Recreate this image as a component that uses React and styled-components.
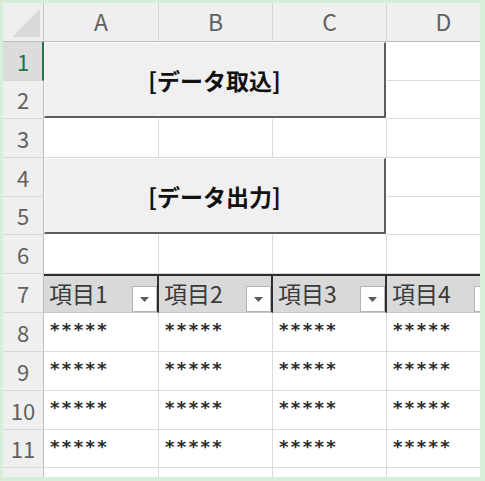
import React from "react";
import styled, { createGlobalStyle } from "styled-components";

const Global = createGlobalStyle`
  html, body { margin: 0; padding: 0; background: #d8eed8; }
  body { font-family: "Noto Sans CJK JP", "Noto Sans", sans-serif; }
`;

const Frame = styled.div`
  width: 485px;
  height: 481px;
  box-sizing: border-box;
  padding: 3px 5px 4px 3px;
  background: #d8eed8;
`;

const Sheet = styled.div`
  width: 477px;
  height: 474px;
  overflow: hidden;
  background: #ffffff;
  display: grid;
  grid-template-columns: 41px 115px 114px 114px 114px;
  grid-template-rows: 39px 39px 38px 39px 39px 38px 39px 39px 39px 39px 39px 38px 39px;
`;

const Corner = styled.div`
  background: #efefef;
  border-right: 1px solid #c8c8c8;
  border-bottom: 1px solid #bdbdbd;
  display: flex;
  align-items: flex-end;
  justify-content: flex-end;
  padding: 0 3px 4px 0;
  box-sizing: border-box;
`;

const ColHead = styled.div`
  background: #efefef;
  border-right: 1px solid #d6d6d6;
  border-bottom: 1px solid #bdbdbd;
  box-sizing: border-box;
  display: flex;
  align-items: center;
  justify-content: center;
  font-size: 23px;
  color: #616161;
  padding-bottom: 2px;
`;

const RowHead = styled.div`
  background: ${(p) => (p.$active ? "#dcdcdc" : "#efefef")};
  border-right: ${(p) => (p.$active ? "2px solid #217346" : "1px solid #bdbdbd")};
  border-bottom: 1px solid #d6d6d6;
  box-sizing: border-box;
  display: flex;
  align-items: center;
  justify-content: center;
  font-size: 22px;
  color: ${(p) => (p.$active ? "#217346" : "#616161")};
  padding-left: ${(p) => (p.$active ? "1px" : "0")};
  padding-bottom: 1px;
`;

const Cell = styled.div`
  background: #ffffff;
  border-right: 1px solid #dadada;
  border-bottom: 1px solid #dadada;
  box-sizing: border-box;
  display: flex;
  align-items: flex-start;
  padding: 8px 0 0 6px;
  font-family: "DejaVu Sans", sans-serif;
  font-weight: 700;
  font-size: 18px;
  line-height: 18px;
  letter-spacing: 2.4px;
  color: #2a2a2a;
  white-space: nowrap;
  overflow: hidden;
`;

const Button = styled.div`
  grid-column: 2 / 5;
  grid-row: ${(p) => p.$row};
  background: #f0f0f0;
  border-right: 2px solid #5e5e5e;
  border-bottom: 2px solid #5e5e5e;
  border-top: 1px solid #fafafa;
  border-left: 1px solid #fafafa;
  margin: 0 1px 1px 0;
  box-sizing: border-box;
  display: flex;
  align-items: center;
  justify-content: center;
  font-size: 23px;
  font-weight: 700;
  color: #111111;
  padding-top: 1px;
`;

const HeadCell = styled.div`
  background: #d9d9d9;
  border-top: 2px solid #2e2e2e;
  border-right: 2px solid #2e2e2e;
  border-bottom: 1px solid #c8c8c8;
  box-sizing: border-box;
  display: flex;
  justify-content: space-between;
  align-items: flex-end;
  padding-left: 5px;
  font-size: 23px;
  color: #3a3a3a;
  white-space: nowrap;
`;

const HeadLabel = styled.span`
  align-self: center;
  line-height: 1;
  padding-bottom: 1px;
`;

const Filter = styled.div`
  width: 25px;
  height: 26px;
  box-sizing: border-box;
  background: #ffffff;
  border: 1px solid #b4b4b4;
  display: flex;
  align-items: center;
  justify-content: center;
  flex-shrink: 0;
`;

const cols = ["A", "B", "C", "D"];
const rowCount = 12;

function Tri() {
  return (
    <svg width="28" height="28" viewBox="0 0 28 28">
      <polygon points="28,0 28,28 0,28" fill="#dadada" />
    </svg>
  );
}

function Arrow() {
  return (
    <svg width="9" height="5" viewBox="0 0 9 5">
      <polygon points="0,0 9,0 4.5,5" fill="#5a5a5a" />
    </svg>
  );
}

export default function App() {
  const items = [];
  items.push(
    <Corner key="corner">
      <Tri />
    </Corner>
  );
  cols.forEach((c) => items.push(<ColHead key={"h" + c}>{c}</ColHead>));

  for (let r = 1; r <= rowCount; r++) {
    items.push(
      <RowHead key={"r" + r} $active={r === 1}>
        {r < 12 ? r : ""}
      </RowHead>
    );
    if (r === 1) {
      items.push(
        <Button key="b1" $row="2 / 4">
          [データ取込]
        </Button>
      );
      items.push(<Cell key="c1d" />);
    } else if (r === 4) {
      items.push(
        <Button key="b2" $row="5 / 7">
          [データ出力]
        </Button>
      );
      items.push(<Cell key="c4d" />);
    } else if (r === 2 || r === 5) {
      items.push(<Cell key={"c" + r + "d"} />);
    } else if (r === 7) {
      [1, 2, 3, 4].forEach((n) =>
        items.push(
          <HeadCell key={"th" + n}>
            <HeadLabel>項目{n}</HeadLabel>
            <Filter>
              <Arrow />
            </Filter>
          </HeadCell>
        )
      );
    } else if (r >= 8 && r <= 11) {
      cols.forEach((c) => items.push(<Cell key={"c" + r + c}>*****</Cell>));
    } else {
      cols.forEach((c) => items.push(<Cell key={"c" + r + c} />));
    }
  }

  return (
    <>
      <Global />
      <Frame>
        <Sheet>{items}</Sheet>
      </Frame>
    </>
  );
}
